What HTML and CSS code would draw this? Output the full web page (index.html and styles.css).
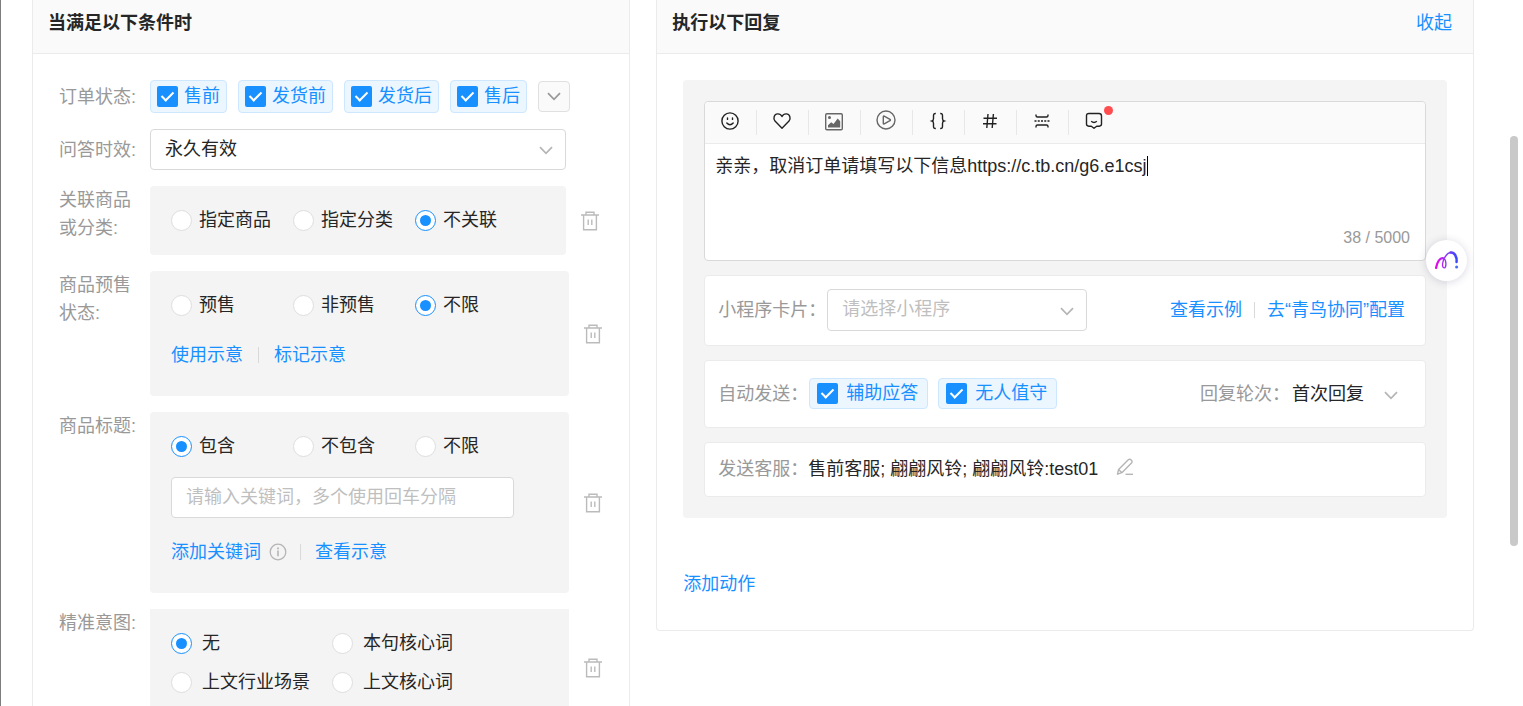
FILE: index.html
```html
<!DOCTYPE html>
<html lang="zh-CN">
<head>
<meta charset="utf-8">
<title>自动回复设置</title>
<link rel="stylesheet" href="styles.css">
</head>
<body>
<svg width="0" height="0" class="defs" aria-hidden="true">
  <symbol id="trash" viewBox="0 0 18 20"><g fill="none" stroke="currentColor" stroke-width="1.4"><path d="M0 4h18M5 4V1.2h8V4M2.6 4v14.7h12.8V4M7.2 8.5V14M10.8 8.5V14"/></g></symbol>
  <symbol id="down" viewBox="0 0 14 9"><path d="M1 1.2 7 7.4l6-6.2" fill="none" stroke="currentColor" stroke-width="1.7"/></symbol>
</svg>
<main class="page">
  <section class="panel conditions">
    <header class="panel-head"><h2>当满足以下条件时</h2></header>
    <div class="panel-body rows">
      <div class="row center">
        <span class="label">订单状态:</span>
        <div class="chips">
          <label class="chip"><input type="checkbox" class="check" checked>售前</label>
          <label class="chip"><input type="checkbox" class="check" checked>发货前</label>
          <label class="chip"><input type="checkbox" class="check" checked>发货后</label>
          <label class="chip"><input type="checkbox" class="check" checked>售后</label>
          <button class="more" aria-label="更多"><svg width="14" height="9"><use href="#down"/></svg></button>
        </div>
      </div>
      <div class="row center narrow">
        <label class="label" for="period">问答时效:</label>
        <div class="select-wrap grow"><select id="period" class="select"><option>永久有效</option></select><svg class="arrow" width="14" height="9"><use href="#down"/></svg></div>
      </div>
      <div class="row tight">
        <span class="label">关联商品<br>或分类:</span>
        <div class="box">
          <div class="radios">
            <label class="option"><input type="radio" class="radio" name="goods">指定商品</label>
            <label class="option"><input type="radio" class="radio" name="goods">指定分类</label>
            <label class="option"><input type="radio" class="radio" name="goods" checked>不关联</label>
          </div>
        </div>
        <button class="trash" aria-label="删除"><svg width="18" height="20"><use href="#trash"/></svg></button>
      </div>
      <div class="row">
        <span class="label">商品预售<br>状态:</span>
        <div class="box tall">
          <div class="radios">
            <label class="option"><input type="radio" class="radio" name="presale">预售</label>
            <label class="option"><input type="radio" class="radio" name="presale">非预售</label>
            <label class="option"><input type="radio" class="radio" name="presale" checked>不限</label>
          </div>
          <div class="links"><a href="#">使用示意</a><i class="bar"></i><a href="#">标记示意</a></div>
        </div>
        <button class="trash" aria-label="删除"><svg width="18" height="20"><use href="#trash"/></svg></button>
      </div>
      <div class="row">
        <span class="label">商品标题:</span>
        <div class="box tall">
          <div class="radios">
            <label class="option"><input type="radio" class="radio" name="title" checked>包含</label>
            <label class="option"><input type="radio" class="radio" name="title">不包含</label>
            <label class="option"><input type="radio" class="radio" name="title">不限</label>
          </div>
          <input class="keyword" type="text" aria-label="关键词" placeholder="请输入关键词，多个使用回车分隔">
          <div class="links"><a href="#">添加关键词</a><svg class="info" width="18" height="18" viewBox="0 0 18 18"><g fill="none" stroke="currentColor"><circle cx="9" cy="9" r="7.8" stroke-width="1.3"/><path d="M9 7.6v5.6" stroke-width="1.6"/><path d="M9 4.4v1.8" stroke-width="1.8"/></g></svg><i class="bar"></i><a href="#">查看示意</a></div>
        </div>
        <button class="trash" aria-label="删除"><svg width="18" height="20"><use href="#trash"/></svg></button>
      </div>
      <div class="row">
        <span class="label">精准意图:</span>
        <div class="box intent">
          <label class="option"><input type="radio" class="radio" name="intent" checked>无</label>
          <label class="option"><input type="radio" class="radio" name="intent">本句核心词</label>
          <label class="option"><input type="radio" class="radio" name="intent">上文行业场景</label>
          <label class="option"><input type="radio" class="radio" name="intent">上文核心词</label>
        </div>
        <button class="trash" aria-label="删除"><svg width="18" height="20"><use href="#trash"/></svg></button>
      </div>
    </div>
  </section>

  <section class="panel replies">
    <header class="panel-head"><h2>执行以下回复</h2><a href="#">收起</a></header>
    <div class="panel-body">
      <div class="action">
        <div class="editor">
          <div class="toolbar">
            <button aria-label="表情"><svg width="20" height="20" viewBox="0 0 20 20"><g fill="none" stroke="currentColor" stroke-width="1.4" stroke-linecap="round"><circle cx="10" cy="10" r="8.1"/><path d="M7.5 7v1.4M12.5 7v1.4M6.8 12q3.2 3.4 6.4 0"/></g></svg></button>
            <button aria-label="收藏"><svg width="20" height="20" viewBox="0 0 20 20"><path d="M10 17.2 3 10.1C.8 7.2 2.2 3 5.6 2.9 7.600 2.800 9.200 3.900 10 5.500c.8-1.600 2.400-2.700 4.400-2.600 3.400.1 4.800 4.300 2.600 7.200z" fill="none" stroke="currentColor" stroke-width="1.4" stroke-linejoin="round"/></svg></button>
            <button class="soft" aria-label="图片"><svg width="20" height="20" viewBox="0 0 20 20"><rect x="1.700" y="2.700" width="16.600" height="16" rx="1.200" fill="none" stroke="currentColor" stroke-width="1.400"/><circle cx="5.500" cy="6.500" r="1.500" fill="currentColor"/><path d="M4 16.500v-2.300l3.200-3 2.300 1.800 4.200-5.500 2.500 2.800v6.200z" fill="currentColor"/></svg></button>
            <button class="soft raised" aria-label="视频"><svg width="20" height="20" viewBox="0 0 20 20"><g fill="none" stroke="currentColor" stroke-width="1.400" stroke-linejoin="round"><circle cx="10" cy="10" r="9"/><path d="M7.300 6.600v6.800q0 .9.900.5l5.800-3.200q.9-.7 0-1.300L8.200 6.100q-.9-.4-.9.500z"/></g></svg></button>
            <button aria-label="变量"><svg width="20" height="20" viewBox="0 0 20 20"><path d="M7.800 2.500C6 2.400 5.500 3.200 5.500 4.800v2.700c0 1.300-.5 2.200-1.500 2.500 1 .3 1.500 1.200 1.500 2.500v2.700c0 1.600.5 2.400 2.300 2.300M12.200 2.500c1.800-.1 2.300.7 2.300 2.300v2.700c0 1.300.5 2.200 1.500 2.500-1 .3-1.500 1.200-1.500 2.500v2.700c0 1.600-.5 2.400-2.300 2.300" fill="none" stroke="currentColor" stroke-width="1.400"/></svg></button>
            <button aria-label="话题"><svg width="20" height="20" viewBox="0 0 20 20"><path d="M8 3 6.800 17M13.400 3l-1.200 14M3.500 7.300H17M3 12.700h13.500" fill="none" stroke="currentColor" stroke-width="1.400"/></svg></button>
            <button aria-label="分隔"><svg width="20" height="20" viewBox="0 0 20 20"><g fill="none" stroke="currentColor" stroke-width="1.400"><path d="M4 3.500v1q0 1.500 1.500 1.500h9q1.500 0 1.500-1.500v-1M4 16.500v-1q0-1.500 1.500-1.500h9q1.500 0 1.500 1.500v1"/><path d="M2.500 10h15" stroke-dasharray="2 1.250"/></g></svg></button>
            <button class="flagged" aria-label="消息"><svg width="20" height="20" viewBox="0 0 20 20"><g fill="none" stroke="currentColor" stroke-width="1.400" stroke-linejoin="round"><path d="M5 2.500h10q2.500 0 2.500 2.500v8q0 2-2.300 2.200h-2.500L10 17.300l-2.700-2.100H4.800Q2.500 15 2.500 13V5q0-2.500 2.500-2.500z"/><path d="M7.200 10.300q2.800 2.400 5.600 0"/></g></svg></button>
          </div>
          <textarea class="message" aria-label="回复内容" spellcheck="false">亲亲，取消订单请填写以下信息https://c.tb.cn/g6.e1csj</textarea>
          <i class="caret"></i>
          <div class="count">38 / 5000</div>
        </div>
        <div class="card applet">
          <label class="tag" for="applet">小程序卡片：</label>
          <div class="select-wrap"><select id="applet" class="select empty"><option>请选择小程序</option></select><svg class="arrow" width="14" height="9"><use href="#down"/></svg></div>
          <div class="links end"><a href="#">查看示例</a><i class="bar"></i><a href="#">去“青鸟协同”配置</a></div>
        </div>
        <div class="card auto">
          <span class="tag">自动发送：</span>
          <div class="chips">
            <label class="chip wide"><input type="checkbox" class="check" checked>辅助应答</label>
            <label class="chip wide"><input type="checkbox" class="check" checked>无人值守</label>
          </div>
          <div class="turn end"><label class="tag" for="turn">回复轮次：</label><div class="select-wrap"><select id="turn" class="select plain"><option>首次回复</option></select><svg class="arrow" width="14" height="9"><use href="#down"/></svg></div></div>
        </div>
        <div class="card staff">
          <span class="tag">发送客服：</span>
          <span>售前客服; 翩翩风铃; 翩翩风铃:test01</span>
          <button class="edit" aria-label="编辑"><svg width="18" height="18" viewBox="0 0 18 18"><g fill="none" stroke="currentColor" stroke-width="1.400" stroke-linejoin="round"><path d="M1.500 16.200 2.600 11.500 12.300 1.800q1.400-1.200 2.900.2t.3 3L5.900 14.700zM2.600 11.500l3.300 3.200"/><path d="M9.500 16.300H17"/></g></svg></button>
        </div>
      </div>
      <a class="add" href="#">添加动作</a>
    </div>
  </section>
</main>
<button class="assistant" aria-label="助手"><svg width="28" height="24" viewBox="0 0 28 24">
  <defs><linearGradient id="ink" x1="2" x2="25" y1="0" y2="0" gradientUnits="userSpaceOnUse"><stop offset="0" stop-color="#f000e8"/><stop offset=".5" stop-color="#8a3cf5"/><stop offset="1" stop-color="#2f49ff"/></linearGradient></defs>
  <g fill="none" stroke="url(#ink)" stroke-linecap="round"><path d="M3 19C4 13 7 8.500 10.200 9.200" stroke-width="2.200"/><path d="M10.200 9.200C13.500 10 13.700 18.800 11.300 18.900 8.200 19 9.500 11 12.500 7.300 14 5 16 3.300 18.600 3.500" stroke-width="1.400"/><path d="M17.500 3.500C21.500 3 24 7.500 23.600 13" stroke-width="2.500"/></g><circle cx="23.600" cy="18" r="1.500" fill="#4668ff"/></svg></button>
<div class="scroll-thumb"></div>
</body>
</html>
```
FILE: styles.css
```css
* { box-sizing: border-box; }
body {
  margin: 0;
  height: 100vh;
  overflow: hidden;
  position: relative;
  border-left: 1px solid #7d7d7d;
  background: #fff;
  color: #262626;
  font: 18px/28px "Liberation Sans", "Noto Sans CJK SC", sans-serif;
}
.defs { position: absolute; }
svg { display: block; flex: none; }
a { color: #1890ff; text-decoration: none; }
button, input, select, textarea { font: inherit; color: inherit; margin: 0; }
button { padding: 0; border: 0; background: none; display: flex; align-items: center; justify-content: center; }

.page { display: flex; align-items: flex-start; gap: 26px; padding: 0 49px 0 31px; }
.panel { border: 1px solid #ebebeb; border-top: 0; border-radius: 0 0 4px 4px; min-width: 0; }
.conditions { flex: 598 1 0; }
.replies { flex: 818 1 0; }
.panel-head {
  display: flex;
  justify-content: space-between;
  padding: 9px 21px 16px 15px;
  background: #fafafa;
  border-bottom: 1px solid #ebebeb;
}
.panel-head h2 { margin: 0; font-size: 18px; font-weight: 700; }
.panel-body { padding: 26px 26px 32px; }

.rows { display: flex; flex-direction: column; gap: 16px; }
.row { display: flex; align-items: flex-start; }
.row.center { align-items: center; }
.row.narrow { padding-right: 37px; }
.row.tight { padding-right: 3px; }
.label { flex: 0 0 91px; color: #999; }
.grow { flex: 1; }

.chips { display: flex; align-items: center; gap: 11px; }
.chip {
  display: flex;
  align-items: center;
  gap: 6px;
  padding: 0 6px;
  line-height: 31px;
  color: #1890ff;
  background: #ebf6ff;
  border: 1px solid #cde7ff;
  border-radius: 4px;
  white-space: nowrap;
}
.chip.wide { gap: 8px; padding: 0 9px 0 7px; line-height: 29px; }
.check {
  appearance: none;
  display: grid;
  justify-items: center;
  align-content: start;
  width: 21px;
  height: 21px;
  border-radius: 2px;
  background: #1890ff;
}
.check::after {
  content: "";
  box-sizing: border-box;
  width: 7px;
  height: 12px;
  margin-top: 3px;
  border: solid #fff;
  border-width: 0 2px 2px 0;
  transform: rotate(45deg);
}
.more { width: 32px; height: 31px; border: 1px solid #e0e0e0; border-radius: 4px; background: #fafafa; color: #999; }

.select-wrap { position: relative; }
.select {
  appearance: none;
  display: block;
  width: 100%;
  height: 41px;
  padding: 0 14px 2px;
  border: 1px solid #d9d9d9;
  border-radius: 4px;
  background: #fff;
}
.select.empty { color: #bfbfbf; }
.arrow { position: absolute; right: 13px; top: 17px; color: #b5b5b5; pointer-events: none; }

.box { flex: 1; min-width: 0; padding: 20px 21px 21px; background: #f4f4f4; border-radius: 4px; }
.box.tall { padding-bottom: 27px; }
.radios { display: grid; grid-template-columns: repeat(3, 122px); }
.option { display: flex; align-items: center; gap: 7px; white-space: nowrap; }
.radio {
  appearance: none;
  display: grid;
  place-items: center;
  width: 21px;
  height: 21px;
  border: 1px solid #dedede;
  border-radius: 50%;
  background: #fff;
}
.radio:checked { border-color: #1890ff; }
.radio:checked::after { content: ""; width: 11px; height: 11px; border-radius: 50%; background: #1890ff; }
.links { display: flex; align-items: center; margin-top: 22px; white-space: nowrap; }
.bar { width: 1px; height: 16px; margin: 0 15px; background: #d9d9d9; }
.info { margin-left: 8px; color: #b5b5b5; }
.info + .bar { margin: 0 14px 0 13px; }
.keyword {
  display: block;
  width: 343px;
  max-width: 100%;
  height: 41px;
  margin-top: 17px;
  padding: 0 14px;
  border: 1px solid #d9d9d9;
  border-radius: 4px;
  background: #fff;
}
.keyword + .links { margin-top: 20px; }
.keyword::placeholder { color: #bfbfbf; }
.intent { display: grid; grid-template-columns: 161px 1fr; row-gap: 11px; padding-bottom: 31px; border-radius: 0; }
.intent .option { gap: 10px; }
.trash { align-self: center; width: 20px; margin-left: 14px; color: #bbb; }

.action { display: flex; flex-direction: column; gap: 14px; padding: 21px; background: #f4f4f4; border-radius: 4px; }
.editor { position: relative; border: 1px solid #d9d9d9; border-radius: 4px; background: #fff; }
.toolbar { display: flex; padding: 8px 0; background: #fafafa; border-bottom: 1px solid #ebebeb; border-radius: 4px 4px 0 0; }
.toolbar button { width: 52px; height: 25px; padding: 0 1px 3px 0; border-right: 1px solid #e8e8e8; position: relative; color: #222; }
.toolbar .soft { color: #666; }
.toolbar .raised { padding-bottom: 6px; }
.toolbar .flagged { border-right: 0; padding-right: 2px; }
.flagged::after { content: ""; position: absolute; left: 35px; top: -4px; width: 9px; height: 9px; border-radius: 50%; background: #ff4d4f; }
.message { display: block; width: 100%; height: 80px; padding: 8px 10px; border: 0; outline: 0; resize: none; background: none; }
.caret { position: absolute; left: 442px; top: 54px; width: 1px; height: 20px; background: #000; }
.count { padding: 0 15px 8px; text-align: right; font-size: 16px; color: #999; }

.card { display: flex; align-items: center; padding: 13px 20px 14px 13px; background: #fff; border: 1px solid #ebebeb; border-radius: 4px; white-space: nowrap; }
.tag { color: #999; }
.end { margin-left: auto; }
.card .links { margin-top: 0; }
.card .links .bar { margin: 0 12px; }
.applet .select-wrap { width: 260px; margin-left: 1px; }
.applet .select { height: 42px; }
.applet .arrow { top: 18px; }
.auto { padding: 17px 0 18px 13px; }
.auto .chips { gap: 10px; margin-left: 1px; }
.turn { display: flex; align-items: center; }
.select.plain { width: 133px; height: 31px; padding: 0; border: 0; background: none; }
.turn .select-wrap { margin-left: 2px; }
.turn .arrow { right: 27px; top: 13px; }
.staff { padding: 12px 13px 13px; }
.edit { margin-left: 18px; padding-bottom: 4px; color: #b5b5b5; }
.add { display: inline-block; margin-top: 52px; }

.assistant { position: fixed; right: 56px; top: 240px; width: 41px; height: 41px; border-radius: 50%; background: #fff; box-shadow: 0 1px 8px rgba(60, 60, 110, .2); }
.scroll-thumb { position: absolute; right: 5px; top: 136px; width: 8px; height: 410px; border-radius: 4px; background: #c9c9c9; }
```
